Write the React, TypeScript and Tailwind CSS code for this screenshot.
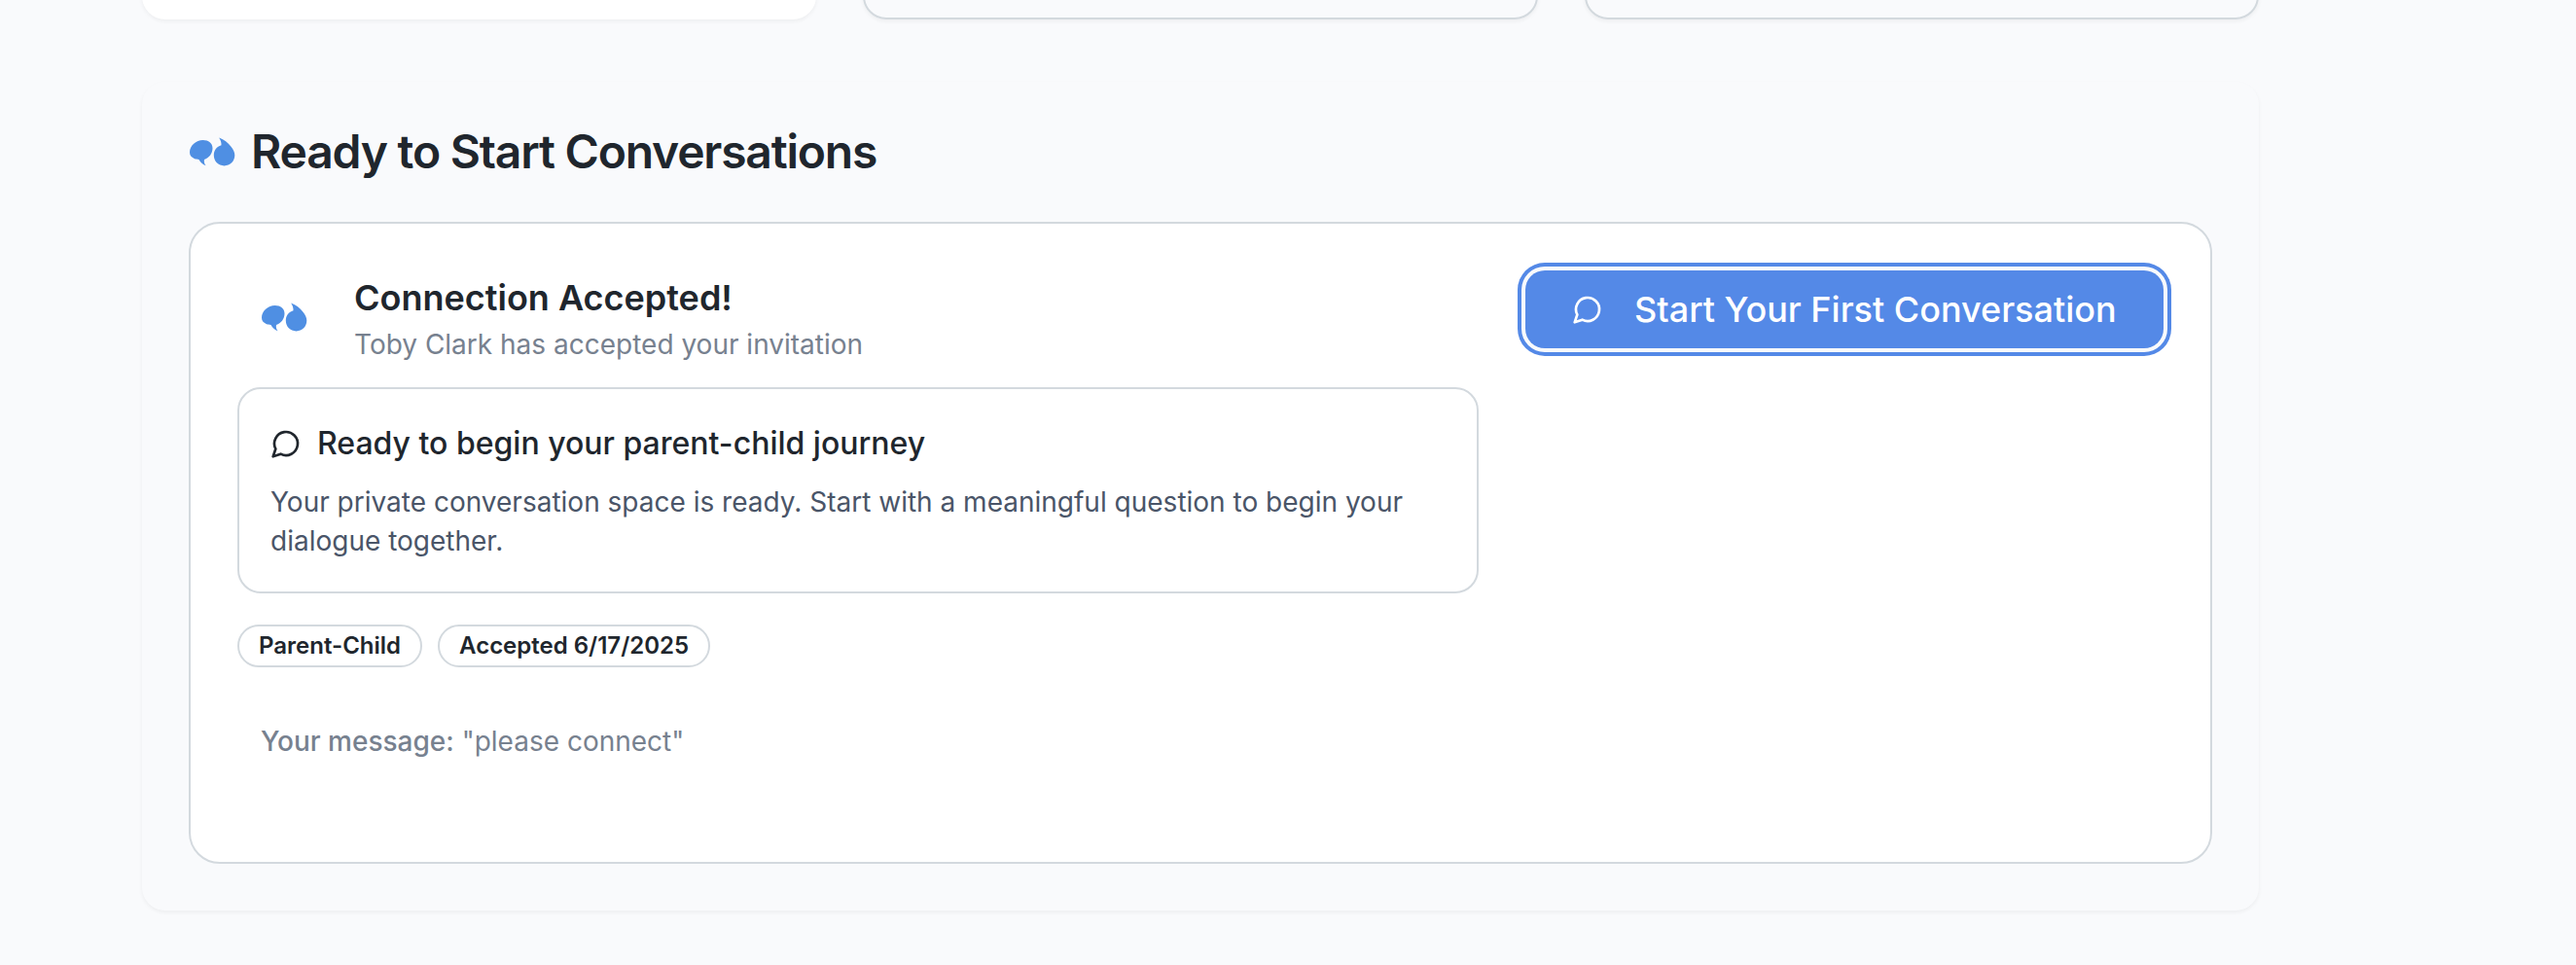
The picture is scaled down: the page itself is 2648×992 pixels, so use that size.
function QuoteBubbles() {
  return (
    <svg viewBox="0 0 48 48" className="size-12 shrink-0" fill="#4f8fe3">
      <path d="M14.6 12C20.400 12 24.500 15.300 24.500 20.200C24.500 26 20.800 30.200 16 31.900C15.500 34 16 36.300 17.600 38.300C14.600 37.300 11.900 34.600 10.500 31.900C8.900 31.800 7.300 31.900 5.700 31.100C2.700 29.600 1 27.600 1 24.500C1 17.600 7.600 12 14.600 12Z" />
      <path d="M31.200 9.400C36.400 11.200 40.300 14.600 43.300 18.500C45.800 21.500 47.300 24.200 47.300 27.600C47.300 33.800 42.600 38.400 36.500 38.400C30.400 38.400 25.800 33.800 25.800 27.600C25.800 22.600 28.800 18.800 33.500 17.300C33.700 14.500 32.800 11.900 31.200 9.400Z" />
    </svg>
  );
}

function ChatIcon({ className = "" }: { className?: string }) {
  return (
    <svg
      viewBox="0 0 24 24"
      className={`size-8 shrink-0 ${className}`}
      fill="none"
      stroke="currentColor"
      strokeWidth="2"
      strokeLinecap="round"
      strokeLinejoin="round"
    >
      <path d="M7.9 20A9 9 0 1 0 4 16.1L2 22Z" />
    </svg>
  );
}

export default function App() {
  return (
    <div className="h-[992px] w-full overflow-hidden bg-[#f9fafc] pl-[146px] font-['Inter',sans-serif] text-[#20262d]">
      <div className="flex w-[2176px] flex-col gap-16">
        <div className="grid h-5 grid-cols-3 content-end gap-12">
          <div className="h-20 rounded-[24px] bg-white shadow-[0_2px_4px_rgba(0,0,0,0.05)]" />
          <div className="h-20 rounded-[24px] border-2 border-[#d3d9de] shadow-[0_2px_4px_rgba(0,0,0,0.05)]" />
          <div className="h-20 rounded-[24px] border-2 border-[#d3d9de] shadow-[0_2px_4px_rgba(0,0,0,0.05)]" />
        </div>

        <section className="h-[852px] rounded-[24px] p-12 shadow-[0_2px_4px_rgba(0,0,0,0.05)]">
          <h2 className="flex h-12 items-center gap-4 text-[48px] leading-12 font-semibold tracking-tight">
            <QuoteBubbles />
            Ready to Start Conversations
          </h2>

          <div className="mt-12 flex h-[660px] items-start justify-between rounded-[32px] border-2 border-[#d3d9de] bg-white p-12">
            <div className="w-[1276px]">
              <div className="flex items-center gap-6">
                <div className="p-6">
                  <QuoteBubbles />
                </div>
                <div>
                  <h3 className="text-[36px] leading-14 font-semibold">Connection Accepted!</h3>
                  <p className="text-[28px] leading-10 text-[#77818f]">Toby Clark has accepted your invitation</p>
                </div>
              </div>

              <div className="mt-6 h-[212px] rounded-[24px] border-2 border-[#d3d9de] p-8">
                <h4 className="flex h-12 items-center gap-4 text-[32px] leading-12 font-medium">
                  <ChatIcon />
                  Ready to begin your parent-child journey
                </h4>
                <p className="mt-4 text-[28px] leading-10 text-[#4a5568]">
                  Your private conversation space is ready. Start with a meaningful question to begin your dialogue together.
                </p>
              </div>

              <div className="mt-8 flex gap-4 text-[24px] leading-8 font-semibold">
                <span className="flex h-11 items-center rounded-full border-2 border-[#d3d9de] px-5">Parent-Child</span>
                <span className="flex h-11 items-center rounded-full border-2 border-[#d3d9de] px-5">Accepted 6/17/2025</span>
              </div>

              <p className="mt-8 p-6 text-[28px] leading-10 text-[#77818f]">
                <span className="font-medium">Your message:</span> "please connect"
              </p>
            </div>

            <button className="flex h-20 w-[656px] items-center rounded-[20px] bg-[#5489e7] px-12 text-[36px] leading-14 font-medium whitespace-nowrap text-white ring-4 ring-[#5489e7] ring-offset-4 ring-offset-[#f9fafc]">
              <ChatIcon className="mr-8" />
              Start Your First Conversation
            </button>
          </div>
        </section>
      </div>
    </div>
  );
}
